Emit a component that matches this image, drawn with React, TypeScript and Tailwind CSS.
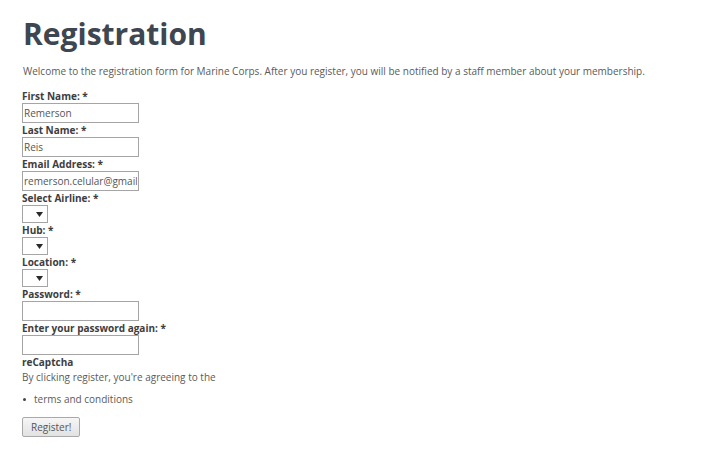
import React from "react";

const labelCls = "block text-[10px] leading-[14px] font-bold text-[#3d3d3d]";
const inputCls =
  "block w-[117px] h-[20px] border border-[#a5a5a5] bg-white px-[1px] text-[10px] text-[#555] outline-none font-['Open_Sans',sans-serif]";

function Field({ label, value, type = "text" }: any) {
  return (
    <div>
      <label className={labelCls}>{label}</label>
      <input className={inputCls} type={type} defaultValue={value} />
    </div>
  );
}

function SelectField({ label }: any) {
  return (
    <div>
      <label className={labelCls}>{label}</label>
      <div className="relative w-[26px] h-[18px] border border-[#a5a5a5] bg-white">
        <select className="w-full h-full appearance-none bg-transparent outline-none" />
        {/* dropdown arrow */}
        <svg
          className="absolute left-[13px] top-[6px] pointer-events-none"
          width="7"
          height="5"
          viewBox="0 0 7 5"
        >
          <path d="M0 0H7L3.5 5Z" fill="#2a2a2a" />
        </svg>
      </div>
    </div>
  );
}

export default function App() {
  return (
    <div className="min-h-screen bg-white pl-[22px] pt-[14px] font-['Open_Sans',sans-serif] text-[#5a5a5a]">
      <h1 className="text-[30px] leading-[40px] font-bold text-[#3d4651] pl-[1px]">
        Registration
      </h1>
      <p className="mt-[10px] text-[10px] leading-[15px] pl-[1px]">
        Welcome to the registration form for Marine Corps. After you register, you will be notified by a
        staff member about your membership.
      </p>
      <form className="mt-[10px]" onSubmit={(e) => e.preventDefault()}>
        <Field label="First Name: *" value="Remerson" />
        <Field label="Last Name: *" value="Reis" />
        <Field label="Email Address: *" value="remerson.celular@gmail.com" />
        <SelectField label="Select Airline: *" />
        <SelectField label="Hub: *" />
        <SelectField label="Location: *" />
        <Field label="Password: *" type="password" />
        <Field label="Enter your password again: *" type="password" />
        <div className="text-[10px] leading-[15px] font-bold text-[#3d3d3d]">reCaptcha</div>
        <div className="text-[10px] leading-[15px]">By clicking register, you're agreeing to the</div>
        <ul className="mt-[7px] text-[10px] leading-[15px]">
          <li className="flex items-center">
            <span className="ml-[1px] w-[3px] h-[3px] rounded-full bg-[#444]" />
            <span className="ml-[8px]">terms and conditions</span>
          </li>
        </ul>
        <button
          type="submit"
          className="mt-[10px] h-[20px] px-[8px] border border-[#a9a9a9] rounded-[2px] bg-gradient-to-b from-[#f6f6f6] to-[#e2e2e2] text-[10px] leading-[18px] text-[#555]"
        >
          Register!
        </button>
      </form>
    </div>
  );
}
